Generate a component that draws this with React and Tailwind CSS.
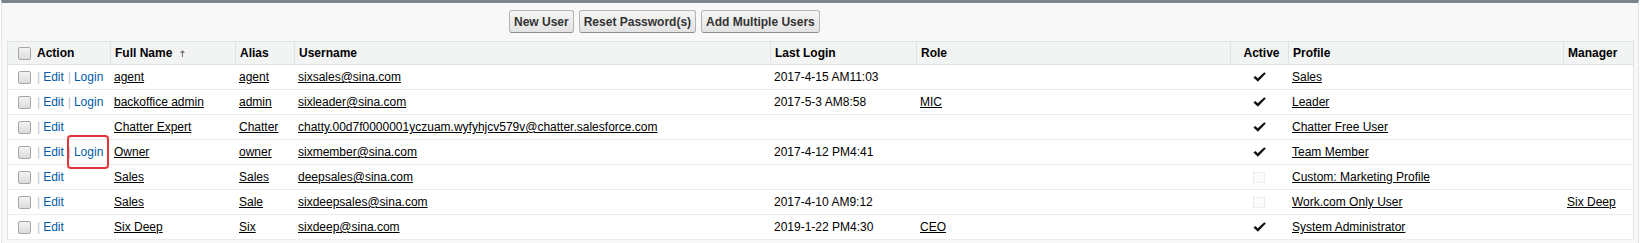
import React from 'react'

const COLS = 'grid grid-cols-[102px_125px_59px_476px_146px_314px_58px_275px_70px]'

const users = [
  { login: true, name: 'agent', alias: 'agent', user: 'sixsales@sina.com', last: '2017-4-15 AM11:03', role: '', active: true, profile: 'Sales', manager: '' },
  { login: true, name: 'backoffice admin', alias: 'admin', user: 'sixleader@sina.com', last: '2017-5-3 AM8:58', role: 'MIC', active: true, profile: 'Leader', manager: '' },
  { login: false, name: 'Chatter Expert', alias: 'Chatter', user: 'chatty.00d7f0000001yczuam.wyfyhjcv579v@chatter.salesforce.com', last: '', role: '', active: true, profile: 'Chatter Free User', manager: '' },
  { login: true, highlight: true, name: 'Owner', alias: 'owner', user: 'sixmember@sina.com', last: '2017-4-12 PM4:41', role: '', active: true, profile: 'Team Member', manager: '' },
  { login: false, name: 'Sales', alias: 'Sales', user: 'deepsales@sina.com', last: '', role: '', active: false, profile: 'Custom: Marketing Profile', manager: '' },
  { login: false, name: 'Sales', alias: 'Sale', user: 'sixdeepsales@sina.com', last: '2017-4-10 AM9:12', role: '', active: false, profile: 'Work.com Only User', manager: 'Six Deep' },
  { login: false, name: 'Six Deep', alias: 'Six', user: 'sixdeep@sina.com', last: '2019-1-22 PM4:30', role: 'CEO', active: true, profile: 'System Administrator', manager: '' }
]

const Checkbox = () => (
  <span className="inline-block w-[13px] h-[13px] shrink-0 rounded-[2px] border border-[#a6a6a6] bg-gradient-to-b from-[#f4f4f4] to-[#dcdcdc]" />
)

const Check = () => (
  <svg width="13" height="10" viewBox="0 0 13 10" className="inline-block">
    <path d="M0.4 5.6 L2.4 4 L4.7 6.3 L11.3 0.2 L12.8 1.4 L4.9 9.8 Z" fill="#111" />
  </svg>
)

const Unchecked = () => (
  <span className="inline-block w-[12px] h-[11px] border border-dotted border-[#dedede] bg-[#fbfbfb]" />
)

const Btn = ({ children }) => (
  <button className="h-[23px] px-[4px] rounded-[3px] border border-[#b5b5b5] border-b-[#8f8f8f] bg-gradient-to-b from-[#f6f6f6] to-[#e3e3e3] text-[12px] font-bold text-[#333]">
    {children}
  </button>
)

const Th = ({ children, className = '' }) => (
  <div className={`flex items-center border-l border-[#e0e3e5] pl-[4px] font-bold ${className}`}>{children}</div>
)

const Td = ({ children, className = '' }) => (
  <div className={`flex items-center pl-[4px] whitespace-nowrap ${className}`}>{children}</div>
)

const L = ({ children }) => <a className="underline text-black cursor-pointer">{children}</a>

export default function App() {
  return (
    <div className="bg-white w-[1643px] h-[243px] text-[12px] text-black" style={{ fontFamily: '"Liberation Sans", Arial, sans-serif' }}>
      <div className="ml-[1px] w-[1638px] h-[243px] border-t-[3px] border-t-[#7d858e] border-x border-x-[#e3e3e3] bg-[#f8f8f8] pt-[7px]">
        <div className="flex gap-[5px] pl-[507px]">
          <Btn>New User</Btn>
          <Btn>Reset Password(s)</Btn>
          <Btn>Add Multiple Users</Btn>
        </div>
        <div className="mt-[8px] ml-[5px] w-[1627px] border-x border-[#e0e3e5] bg-white">
          <div className={`${COLS} h-[24px] bg-[#f2f3f3] border-y border-[#e0e3e5]`}>
            <div className="flex items-center pl-[10px] font-bold">
              <Checkbox />
              <span className="ml-[6px]">Action</span>
            </div>
            <Th>
              Full Name
              <svg width="5" height="7" viewBox="0 0 5 7" className="ml-[8px]">
                <path d="M2.5 0 L5 3 L3 3 L3 7 L2 7 L2 3 L0 3 Z" fill="#777" />
              </svg>
            </Th>
            <Th>Alias</Th>
            <Th>Username</Th>
            <Th>Last Login</Th>
            <Th>Role</Th>
            <Th className="justify-center pl-0">Active</Th>
            <Th>Profile</Th>
            <Th>Manager</Th>
          </div>
          {users.map((u, i) => (
            <div key={i} className={`${COLS} h-[25px] border-b border-[#ececec]`}>
              <div className="flex items-center pl-[10px] whitespace-nowrap">
                <Checkbox />
                <span className="ml-[6px] text-[#b9c3cf]">|</span>
                <span className="ml-[3px] text-[#015ba7]">Edit</span>
                {u.login && (
                  <>
                    <span className="ml-[4px] text-[#b9c3cf]">|</span>
                    <span className="relative ml-[3px] text-[#015ba7]">
                      Login
                      {u.highlight && (
                        <span className="absolute left-[-7px] right-[-6px] top-[-8px] bottom-[-8px] border-2 border-[#e3343b] rounded-[4px]" />
                      )}
                    </span>
                  </>
                )}
              </div>
              <Td><L>{u.name}</L></Td>
              <Td><L>{u.alias}</L></Td>
              <Td><L>{u.user}</L></Td>
              <Td>{u.last}</Td>
              <Td>{u.role && <L>{u.role}</L>}</Td>
              <div className="flex items-center justify-center">{u.active ? <Check /> : <Unchecked />}</div>
              <Td><L>{u.profile}</L></Td>
              <Td>{u.manager && <L>{u.manager}</L>}</Td>
            </div>
          ))}
        </div>
      </div>
    </div>
  )
}
